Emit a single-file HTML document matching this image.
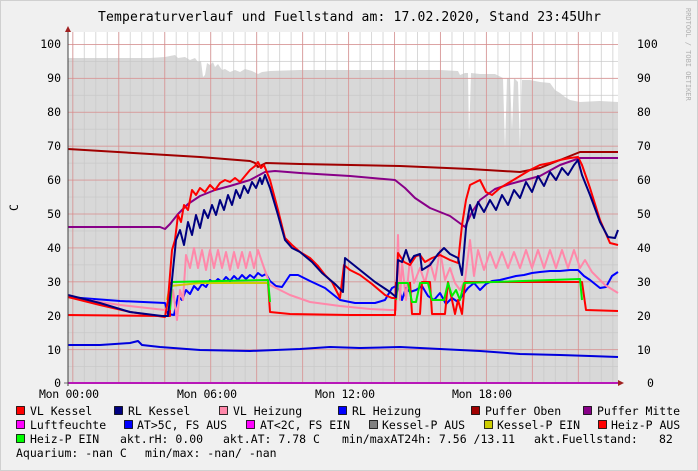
<!DOCTYPE html>
<html><head><meta charset="utf-8"><style>
html,body{margin:0;padding:0;background:#f0f0f0;}
svg{display:block;font-family:"DejaVu Sans Mono","Liberation Mono",monospace;}
</style></head><body>
<svg width="698" height="471" viewBox="0 0 698 471" xmlns="http://www.w3.org/2000/svg">
<defs>
<pattern id="vm" x="72.3" y="0" width="11.49" height="400" patternUnits="userSpaceOnUse"><rect x="0" y="0" width="1" height="400" fill="#c8c8c8" fill-opacity="0.7"/></pattern>
<pattern id="hm" x="0" y="383" width="700" height="16.95" patternUnits="userSpaceOnUse"><rect x="0" y="0" width="700" height="1" fill="#c8c8c8" fill-opacity="0.7"/></pattern>
<pattern id="vr" x="72.3" y="0" width="45.96" height="400" patternUnits="userSpaceOnUse"><rect x="0" y="0" width="1" height="400" fill="#e08080" fill-opacity="0.6"/></pattern>
<pattern id="hr" x="0" y="383" width="700" height="33.9" patternUnits="userSpaceOnUse"><rect x="0" y="0" width="700" height="1" fill="#e08080" fill-opacity="0.6"/></pattern>
</defs>
<rect x="0" y="0" width="698" height="471" fill="#f0f0f0"/>
<rect x="0.5" y="0.5" width="697" height="470" fill="none" stroke="#d0d0d0"/>
<rect x="68" y="32" width="550" height="351" fill="#ffffff"/>
<polygon fill="#d8d8d8" points="68,383 68,58 120,58 150,58 165,57 170,56 175,55 178,58 185,57 190,60 195,58 198,62 201,61 203,77 205,75 207,63 210,65 213,62 215,67 218,64 222,70 225,69 230,72 235,70 240,72 245,69 252,71 258,74 262,72 270,71 300,70 350,70 400,70 440,70 458,71 460,75 465,73 468,73 469,140 471,73 480,74 495,74 503,78 505,150 507,78 510,78 512,130 514,78 518,82 520,150 522,80 530,80 540,82 550,83 555,90 560,93 565,97 570,100 580,102 600,101 618,102 618,383"/>
<rect x="68" y="32" width="550" height="351" fill="url(#vm)"/>
<rect x="68" y="32" width="550" height="351" fill="url(#hm)"/>
<rect x="68" y="32" width="550" height="351" fill="url(#vr)"/>
<rect x="68" y="32" width="550" height="351" fill="url(#hr)"/>
<g fill="none" stroke-width="2" stroke-linejoin="round">
<polyline stroke="#a00000" points="68,149 150,154 200,157 250,161 255,163 258,167 262,165 266,163 300,164 400,166 470,169 520,172 540,168 560,160 580,152 618,152"/>
<polyline stroke="#880088" points="68,227 160,227 165,229 170,224 178,214 188,204 200,196 215,190 230,186 250,180 265,172 275,171 300,173 350,176 395,180 405,188 415,198 430,208 450,216 465,227 472,212 480,200 495,189 510,184 540,176 560,165 580,158 618,158"/>
<polyline stroke="#0000ff" points="68,297 120,301 165,303 168,314 174,315 178,296 182,300 186,290 190,294 194,286 198,290 202,284 206,287 210,280 214,283 218,279 222,282 226,277 230,281 234,276 238,280 242,275 246,279 250,275 254,278 258,273 262,276 266,274 270,281 276,286 282,287 290,275 298,275 310,281 325,288 340,300 355,303 375,303 385,300 392,288 398,285 402,300 406,288 410,292 416,290 422,286 428,296 434,300 440,293 446,304 452,298 458,302 462,296 468,288 474,283 480,290 486,284 492,281 500,280 508,278 516,276 524,275 532,273 540,272 550,271 560,271 570,270 578,270 584,276 590,280 600,288 606,287 612,276 618,272"/>
<polyline stroke="#ff88aa" points="68,297 120,305 165,310 170,310 173,290 177,320 180,290 183,300 186,255 190,268 194,248 198,268 202,250 206,270 210,250 214,268 218,250 222,268 226,252 230,270 234,252 238,268 242,252 246,268 250,252 254,268 258,250 262,262 270,285 290,295 310,302 340,306 370,309 390,310 396,310 398,235 400,300 402,262 406,300 410,258 414,283 420,268 425,283 430,262 435,280 440,250 445,280 450,268 455,283 460,290 465,280 470,240 474,276 478,250 484,270 490,252 496,268 502,252 508,268 514,252 520,268 526,250 532,268 538,250 544,268 550,250 556,268 562,250 568,268 574,250 580,268 585,260 592,272 605,285 618,293"/>
<polyline stroke="#0000dd" points="68,345 100,345 130,343 138,341 142,345 160,347 200,350 250,351 300,349 330,347 360,348 400,347 440,349 480,351 520,354 560,355 590,356 618,357"/>
<polyline stroke="#ff0000" points="68,315 165,316 170,316 170,282"/>
<polyline stroke="#ff0000" points="268,282 270,312 290,314 350,315 395,315 396,282"/>
<polyline stroke="#ff0000" points="410,282 412,314 420,314 422,282 430,282 432,314 445,314 448,282 452,300 455,314 458,300 462,314 465,282 582,282 586,310 618,311"/>
<polyline stroke="#cccc00" points="167,300 170,286 200,283 268,283"/>
<polyline stroke="#00ee00" points="170,310 172,282 268,280 270,302"/>
<polyline stroke="#00ee00" points="396,300 398,283 408,283 412,302 416,302 420,283 428,283 432,300 444,300 448,283 452,296 456,290 460,300 464,283 580,279 582,300"/>
<polyline stroke="#ff0000" points="68,297 100,305 130,312 165,317 168,300 172,250 175,240 178,215 181,222 184,205 188,210 192,190 196,195 200,188 205,192 210,185 215,190 220,183 225,180 230,182 235,178 240,182 245,176 250,170 255,166 258,162 261,168 264,165 270,180 278,210 285,238 292,245 300,252 310,258 318,266 325,275 332,282 340,298 344,265 350,270 360,275 372,284 385,295 392,298 396,298 398,253 404,262 410,265 416,256 420,255 425,262 432,258 440,255 450,260 458,263 462,225 466,200 470,185 476,182 480,180 486,192 492,195 500,188 510,182 520,176 530,170 540,165 550,163 560,160 570,158 578,157 582,165 590,188 600,220 610,243 618,245"/>
<polyline stroke="#000080" points="68,295 100,303 130,312 162,316 168,316 172,280 176,240 180,230 184,245 188,222 192,235 196,215 200,228 204,210 208,218 212,205 216,215 220,200 224,210 228,195 232,205 236,190 240,198 244,186 248,193 252,182 256,188 260,178 262,184 265,175 270,188 278,215 285,240 292,248 300,252 312,262 322,273 335,284 343,292 345,258 350,262 360,270 375,282 390,292 396,297 398,260 402,262 406,250 410,262 414,256 420,254 422,270 430,265 438,254 444,248 450,254 458,258 462,275 466,228 470,205 474,218 478,202 484,212 490,200 496,210 502,195 508,205 514,190 520,198 526,182 532,192 538,176 544,186 550,172 556,180 562,168 568,175 574,165 578,160 582,175 590,195 600,222 608,237 615,238 618,230"/>
</g>
<line x1="68" y1="383" x2="618" y2="383" stroke="#ff00ff" stroke-width="2"/>
<line x1="68" y1="30" x2="68" y2="386" stroke="#404040"/>
<polygon points="65,32 71,32 68,26" fill="#a02020"/>
<line x1="64" y1="383" x2="622" y2="383" stroke="#404040" stroke-width="0.8"/>
<polygon points="618,380 618,386 624,383" fill="#a02020"/>
<g font-size="11.5" fill="#000">
<g text-anchor="end">
<text x="61" y="48">100</text><text x="61" y="82">90</text><text x="61" y="116">80</text><text x="61" y="150">70</text><text x="61" y="184">60</text><text x="61" y="218">50</text><text x="61" y="252">40</text><text x="61" y="286">30</text><text x="61" y="320">20</text><text x="61" y="354">10</text><text x="61" y="387">0</text>
</g>
<g>
<text x="637" y="48">100</text><text x="637" y="82">90</text><text x="637" y="116">80</text><text x="637" y="150">70</text><text x="637" y="184">60</text><text x="637" y="218">50</text><text x="637" y="252">40</text><text x="637" y="286">30</text><text x="637" y="320">20</text><text x="637" y="354">10</text><text x="647" y="387">0</text>
</g>
<text x="39" y="398" textLength="60">Mon 00:00</text><text x="177" y="398" textLength="60">Mon 06:00</text><text x="315" y="398" textLength="60">Mon 12:00</text><text x="452" y="398" textLength="60">Mon 18:00</text>
<text transform="translate(18,211) rotate(-90)">C</text>
<text x="98" y="21" font-size="13" textLength="503">Temperaturverlauf und Fuellstand am: 17.02.2020, Stand 23:45Uhr</text>
</g>
<text transform="translate(686,8) rotate(90)" font-size="7" fill="#b0b0b0">RRDTOOL / TOBI OETIKER</text>
<g stroke="#000" stroke-width="0.8">
<rect x="16.5" y="406.5" width="8" height="8" fill="#ff0000"/>
<rect x="114.5" y="406.5" width="8" height="8" fill="#000080"/>
<rect x="219.5" y="406.5" width="8" height="8" fill="#ff88aa"/>
<rect x="338.5" y="406.5" width="8" height="8" fill="#0000ff"/>
<rect x="471.5" y="406.5" width="8" height="8" fill="#a00000"/>
<rect x="583.5" y="406.5" width="8" height="8" fill="#880088"/>
<rect x="16.5" y="420.5" width="8" height="8" fill="#ff00ff"/>
<rect x="124.5" y="420.5" width="8" height="8" fill="#0000ff"/>
<rect x="246.5" y="420.5" width="8" height="8" fill="#ff00ff"/>
<rect x="369.5" y="420.5" width="8" height="8" fill="#808080"/>
<rect x="484.5" y="420.5" width="8" height="8" fill="#cccc00"/>
<rect x="598.5" y="420.5" width="8" height="8" fill="#ff0000"/>
<rect x="16.5" y="434.5" width="8" height="8" fill="#00ff00"/>
</g>
<g font-size="11.5" fill="#000" xml:space="preserve">
<text x="30" y="415">VL Kessel</text><text x="128" y="415">RL Kessel</text><text x="233" y="415">VL Heizung</text><text x="352" y="415">RL Heizung</text><text x="485" y="415">Puffer Oben</text><text x="597" y="415">Puffer Mitte</text>
<text x="30" y="429">Luftfeuchte</text><text x="137" y="429">AT&gt;5C, FS AUS</text><text x="260" y="429">AT&lt;2C, FS EIN</text><text x="382" y="429">Kessel-P AUS</text><text x="497" y="429">Kessel-P EIN</text><text x="611" y="429">Heiz-P AUS</text>
<text x="30" y="443">Heiz-P EIN</text><text x="120" y="443">akt.rH: 0.00</text><text x="223" y="443">akt.AT: 7.78 C</text><text x="342" y="443">min/maxAT24h: 7.56 /13.11</text><text x="534" y="443">akt.Fuellstand:</text><text x="659" y="443">82</text>
<text x="16" y="457">Aquarium: -nan C</text><text x="145" y="457">min/max: -nan/ -nan</text>
</g>
</svg>
</body></html>
